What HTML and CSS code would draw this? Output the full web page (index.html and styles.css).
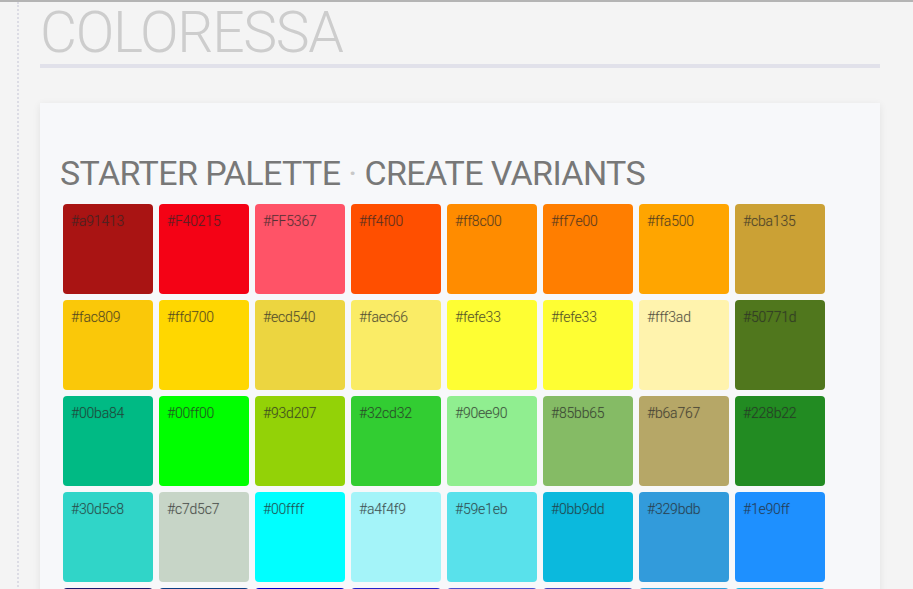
FILE: index.html
```html
<!DOCTYPE html>
<html lang="en">
<head>
  <meta charset="UTF-8" />
  <meta name="viewport" content="width=device-width, initial-scale=1.0"/>
  <title>Coloressa</title>
  <link rel="stylesheet" href="styles.css">
</head>
<body>
  <div class="page">
    <header>
      <h1>COLORESSA</h1>
    </header>

    <section class="card">
      <h2>STARTER PALETTE <span class="sep">&middot;</span> CREATE VARIANTS</h2>
      <div class="swatches">
        <div class="swatch" style="background:#a91413"><span>#a91413</span></div>
        <div class="swatch" style="background:#F40215"><span>#F40215</span></div>
        <div class="swatch" style="background:#FF5367"><span>#FF5367</span></div>
        <div class="swatch" style="background:#ff4f00"><span>#ff4f00</span></div>
        <div class="swatch" style="background:#ff8c00"><span>#ff8c00</span></div>
        <div class="swatch" style="background:#ff7e00"><span>#ff7e00</span></div>
        <div class="swatch" style="background:#ffa500"><span>#ffa500</span></div>
        <div class="swatch" style="background:#cba135"><span>#cba135</span></div>

        <div class="swatch" style="background:#fac809"><span>#fac809</span></div>
        <div class="swatch" style="background:#ffd700"><span>#ffd700</span></div>
        <div class="swatch" style="background:#ecd540"><span>#ecd540</span></div>
        <div class="swatch" style="background:#faec66"><span>#faec66</span></div>
        <div class="swatch" style="background:#fefe33"><span>#fefe33</span></div>
        <div class="swatch" style="background:#fefe33"><span>#fefe33</span></div>
        <div class="swatch" style="background:#fff3ad"><span>#fff3ad</span></div>
        <div class="swatch" style="background:#50771d"><span>#50771d</span></div>

        <div class="swatch" style="background:#00ba84"><span>#00ba84</span></div>
        <div class="swatch" style="background:#00ff00"><span>#00ff00</span></div>
        <div class="swatch" style="background:#93d207"><span>#93d207</span></div>
        <div class="swatch" style="background:#32cd32"><span>#32cd32</span></div>
        <div class="swatch" style="background:#90ee90"><span>#90ee90</span></div>
        <div class="swatch" style="background:#85bb65"><span>#85bb65</span></div>
        <div class="swatch" style="background:#b6a767"><span>#b6a767</span></div>
        <div class="swatch" style="background:#228b22"><span>#228b22</span></div>

        <div class="swatch" style="background:#30d5c8"><span>#30d5c8</span></div>
        <div class="swatch" style="background:#c7d5c7"><span>#c7d5c7</span></div>
        <div class="swatch" style="background:#00ffff"><span>#00ffff</span></div>
        <div class="swatch" style="background:#a4f4f9"><span>#a4f4f9</span></div>
        <div class="swatch" style="background:#59e1eb"><span>#59e1eb</span></div>
        <div class="swatch" style="background:#0bb9dd"><span>#0bb9dd</span></div>
        <div class="swatch" style="background:#329bdb"><span>#329bdb</span></div>
        <div class="swatch" style="background:#1e90ff"><span>#1e90ff</span></div>

        <div class="swatch" style="background:#191970"><span>#191970</span></div>
        <div class="swatch" style="background:#0b3c84"><span>#0b3c84</span></div>
        <div class="swatch" style="background:#0000cd"><span>#0000cd</span></div>
        <div class="swatch" style="background:#2222cc"><span>#2222cc</span></div>
        <div class="swatch" style="background:#4b4fd2"><span>#4b4fd2</span></div>
        <div class="swatch" style="background:#4646c0"><span>#4646c0</span></div>
        <div class="swatch" style="background:#2f9fe0"><span>#2f9fe0</span></div>
        <div class="swatch" style="background:#1cb4e6"><span>#1cb4e6</span></div>
      </div>
    </section>
  </div>
</body>
</html>
```

FILE: styles.css
```css
html, body {
  margin: 0;
  padding: 0;
}

body {
  font-family: Roboto, 'Noto Sans', sans-serif;
  background: #f4f4f4;
  border-top: 2px solid #b4b4b4;
  min-height: 589px;
  box-sizing: border-box;
}

.page {
  margin-left: 17px;
  border-left: 2px dotted #dcdce4;
  padding: 0 33px 0 21px;
  min-height: 587px;
}

header h1 {
  margin: 0;
  padding-top: 3px;
  font-size: 57px;
  font-weight: 300;
  line-height: 56px;
  letter-spacing: -1.3px;
  color: #cdcdcd;
  border-bottom: 4px solid #e1e1ea;
  padding-bottom: 3px;
}

.card {
  margin-top: 35px;
  background: #f7f8fa;
  padding: 50px 20px 20px;
  box-shadow: 0 2px 8px rgba(0, 0, 0, 0.08);
}

.card h2 {
  margin: 0 0 11px;
  font-size: 34px;
  font-weight: 400;
  line-height: 40px;
  letter-spacing: -0.6px;
  color: #787878;
}

.card h2 .sep {
  color: #c8c8c8;
}

.swatches {
  display: grid;
  grid-template-columns: repeat(8, 90px);
  gap: 6px;
  padding-left: 3px;
}

.swatch {
  height: 90px;
  border-radius: 4px;
  padding: 7px 8px;
  box-sizing: border-box;
}

.swatch span {
  font-size: 14px;
  font-weight: 300;
  letter-spacing: -0.2px;
  color: rgba(45, 45, 45, 0.75);
  text-shadow: 0 0 1px rgba(0, 0, 0, 0.25);
}
```
